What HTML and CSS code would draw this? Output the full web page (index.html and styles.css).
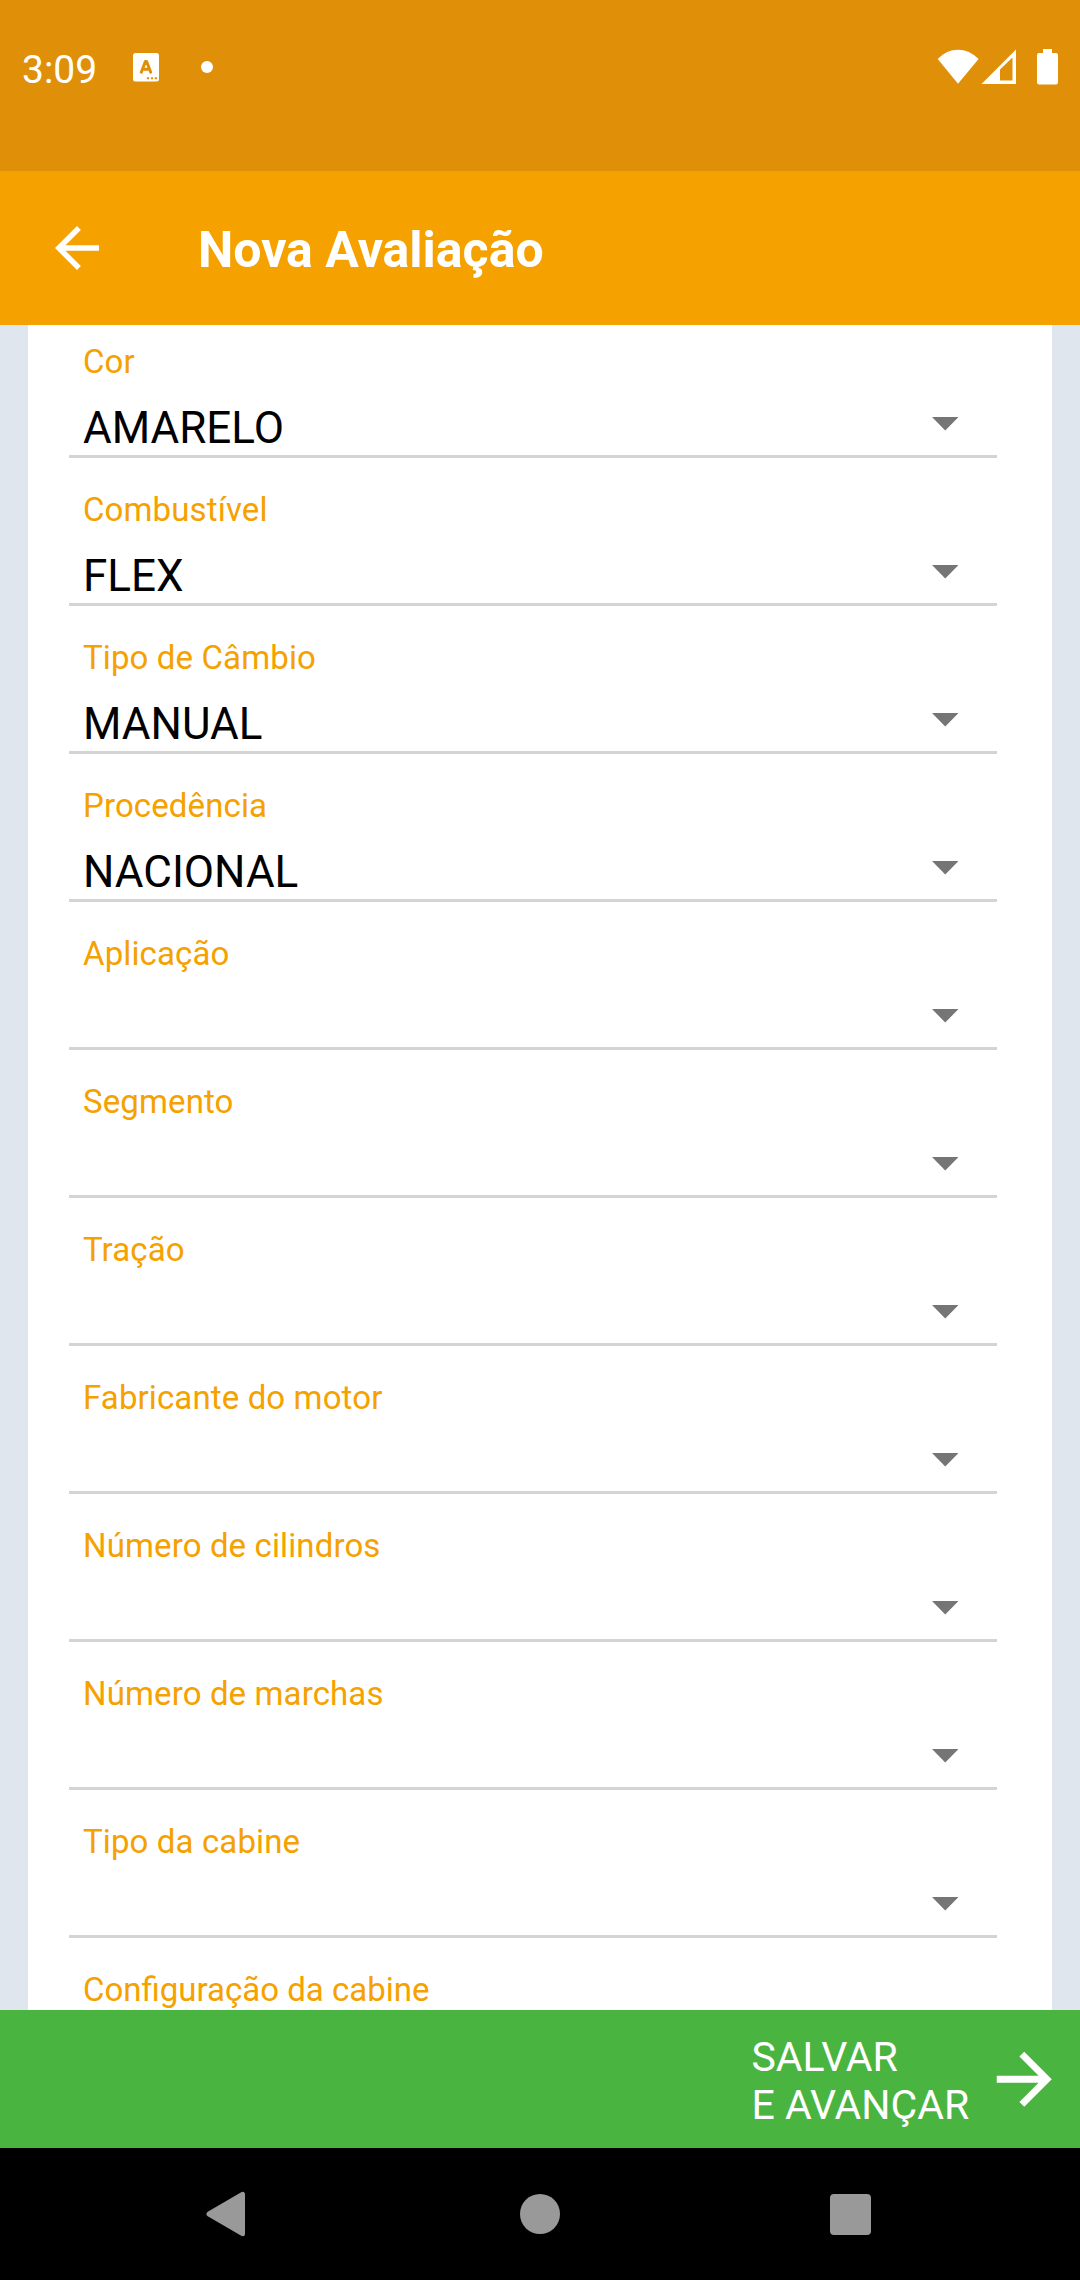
FILE: index.html
```html
<!DOCTYPE html>
<html lang="pt-BR">
<head>
<meta charset="utf-8">
<title>Nova Avaliação</title>
<link rel="stylesheet" href="styles.css">
</head>
<body>
<div class="screen">
  <div class="status">
    <span class="clock">3:09</span>
    <svg class="ime" width="26" height="29" viewBox="0 0 26 29"><rect width="26" height="28.6" rx="2.5" fill="#fff"/><path d="M8.3 19.2 12.4 8.500h1.200l4.100 10.700M9.900 16.300h6.200" fill="none" stroke="#df9008" stroke-width="3" stroke-linecap="round" stroke-linejoin="round"/><path d="M13.900 24.300h2.200v2h-2.200zM17.900 24.300h2.200v2h-2.200zM21.700 24.300h2.200v2h-2.200z" fill="#df9008"/></svg>
    <span class="dot"></span>
    <svg class="wifi" width="42" height="36" viewBox="0 0 42 36"><path d="M.7 10.100Q9.500.8 21 .8T41.600 10.100L21 34.800z" fill="#fff"/></svg>
    <svg class="signal" width="36" height="36" viewBox="0 0 36 36"><path fill="#fff" fill-rule="evenodd" d="M.5 35 35 .5V35zM19 20.500V31.500h12.500V8.500z"/></svg>
    <svg class="battery" width="21" height="36" viewBox="0 0 21 36"><path fill="#fff" d="M6 0h9v4h4a2 2 0 0 1 2 2v27.500a2 2 0 0 1-2 2H2a2 2 0 0 1-2-2V6a2 2 0 0 1 2-2h4z"/></svg>
  </div>
  <header class="appbar">
    <svg width="66" height="66" viewBox="0 0 24 24"><path fill="#fff" d="M20 11H7.830l5.590-5.590L12 4l-8 8 8 8 1.410-1.410L7.830 13H20z"/></svg>
    <h1 class="title">Nova Avaliação</h1>
  </header>
  <main class="content">
    <div class="card">
      <div class="field"><div class="label">Cor</div><div class="select"><span>AMARELO</span><i class="caret"></i></div></div>
      <div class="field"><div class="label">Combustível</div><div class="select"><span>FLEX</span><i class="caret"></i></div></div>
      <div class="field"><div class="label">Tipo de Câmbio</div><div class="select"><span>MANUAL</span><i class="caret"></i></div></div>
      <div class="field"><div class="label">Procedência</div><div class="select"><span>NACIONAL</span><i class="caret"></i></div></div>
      <div class="field"><div class="label">Aplicação</div><div class="select"><span></span><i class="caret"></i></div></div>
      <div class="field"><div class="label">Segmento</div><div class="select"><span></span><i class="caret"></i></div></div>
      <div class="field"><div class="label">Tração</div><div class="select"><span></span><i class="caret"></i></div></div>
      <div class="field"><div class="label">Fabricante do motor</div><div class="select"><span></span><i class="caret"></i></div></div>
      <div class="field"><div class="label">Número de cilindros</div><div class="select"><span></span><i class="caret"></i></div></div>
      <div class="field"><div class="label">Número de marchas</div><div class="select"><span></span><i class="caret"></i></div></div>
      <div class="field"><div class="label">Tipo da cabine</div><div class="select"><span></span><i class="caret"></i></div></div>
      <div class="field"><div class="label">Configuração da cabine</div></div>
    </div>
  </main>
  <div class="save">
    <span class="save-text">SALVAR<br>E AVANÇAR</span>
    <svg width="82.5" height="82.5" viewBox="0 0 24 24"><path fill="#fff" d="m12 4-1.410 1.410L16.170 11H4v2h12.170l-5.580 5.590L12 20l8-8z"/></svg>
  </div>
  <nav class="navbar">
    <svg width="40" height="46" viewBox="0 0 40 46"><path d="M36.500 3.300v39.400L3 23z" fill="#999" stroke="#999" stroke-width="5" stroke-linejoin="round"/></svg>
    <span class="home"></span>
    <span class="recent"></span>
  </nav>
</div>
</body>
</html>
```
FILE: styles.css
```css
* { box-sizing: border-box; }
body { margin: 0; font-family: Roboto, sans-serif; }
.screen { width: 1080px; height: 2280px; display: flex; flex-direction: column; overflow: hidden; }
.screen svg { display: block; flex: none; }

.status { height: 171px; background: #df9008; color: #fff; display: flex; align-items: flex-start; padding: 49px 22px 0 22px; }
.clock { width: 111px; padding-top: 1px; font-size: 39px; line-height: 40px; }
.ime { margin-top: 4px; }
.dot { width: 12px; height: 12px; margin: 12px 0 0 42px; border-radius: 50%; background: #fff; }
.wifi { margin-left: auto; }
.signal { margin-left: 2px; }
.battery { margin-left: 20px; }

.appbar { height: 154px; background: #f5a100; color: #fff; display: flex; align-items: center; padding-left: 44px; }
.title { margin: 4px 0 0 88px; font-size: 50px; line-height: 60px; font-weight: 700; }

.content { height: 1685px; background: #dfe6ee; padding: 0 28px; overflow: hidden; }
.card { background: #fff; padding: 0 55px 0 41px; height: 1685px; }
.field { height: 148px; padding-top: 32px; }
.field:first-child { height: 133px; padding-top: 17px; }
.label { padding-left: 14px; font-size: 33px; line-height: 40px; letter-spacing: 0.12px; color: #f5a100; }
.field:last-child .label { letter-spacing: normal; }
.select { height: 76px; border-bottom: 3px solid #d4d4d4; display: flex; justify-content: space-between; padding: 20px 38px 0 14px; font-size: 44px; line-height: 52px; color: #000; }
.caret { width: 27.500px; height: 14px; margin-top: 14.500px; background: #757575; clip-path: polygon(0 0, 100% 0, 50% 100%); }

.save { height: 138px; background: #49b43f; color: #fff; display: flex; align-items: center; justify-content: flex-end; padding-right: 15px; }
.save-text { width: 231px; padding-top: 4px; font-size: 41px; line-height: 48px; }

.navbar { height: 132px; background: #000; display: flex; align-items: center; padding-left: 206px; }
.home { width: 40px; height: 40px; margin-left: 274px; border-radius: 50%; background: #999; }
.recent { width: 41px; height: 41px; margin-left: 270px; border-radius: 4px; background: #999; }
```
